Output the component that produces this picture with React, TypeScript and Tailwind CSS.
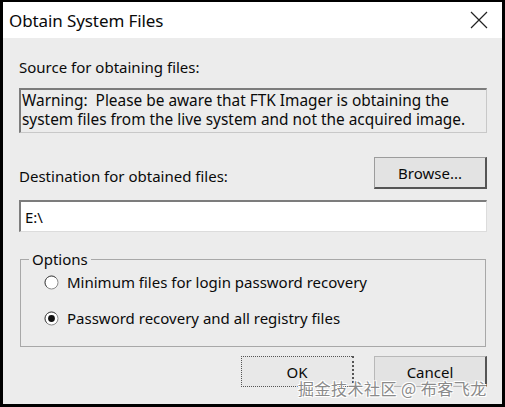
import React from "react";

const font = { fontFamily: '"Noto Sans", "Open Sans", sans-serif' };

function Radio({ checked }: { checked?: boolean }) {
  return (
    <svg width="15" height="15" viewBox="0 0 15 15" className="shrink-0">
      <circle cx="7.5" cy="7.5" r="6.5" fill="#ffffff" stroke="#8a8a8a" strokeWidth="1" />
      <path d="M2.9 12.1 A6.5 6.5 0 0 1 12.1 2.9" fill="none" stroke="#5a5a5a" strokeWidth="1" />
      {checked && <circle cx="7.5" cy="7.5" r="3.4" fill="#111111" />}
    </svg>
  );
}

export default function App() {
  return (
    <div
      className="w-[505px] h-[407px] bg-black pt-[2px] pl-[3px] pr-[3px] pb-[3px] text-[#0a0a0a] relative overflow-hidden"
      style={font}
    >
      <div className="w-full h-full bg-[#ececec] flex flex-col">
        {/* Title bar */}
        <div className="h-[36px] bg-white flex items-center justify-between pl-[6px] pr-[14px] shrink-0">
          <span className="text-[17px] leading-none tracking-[-0.1px]">Obtain System Files</span>
          <svg width="18" height="18" viewBox="0 0 18 18">
            <path d="M1 1 L17 17 M17 1 L1 17" stroke="#222" strokeWidth="1.2" />
          </svg>
        </div>

        <div className="flex flex-col pl-[16px] pr-[15px] text-[15px] leading-[20px]">
          <div className="mt-[19px] h-[20px]">Source for obtaining files:</div>
          <div className="mt-[11px] h-[45px] border-t-2 border-l-2 border-t-[#7c7c7c] border-l-[#7c7c7c] border-b border-r border-b-[#c8c8c8] border-r-[#c8c8c8] pl-[1px] pt-[1px] leading-[19px] text-[15.4px]">
            <div>Warning:&nbsp; Please be aware that FTK Imager is obtaining the</div>
            <div>system files from the live system and not the acquired image.</div>
          </div>

          <div className="mt-[24px] flex items-end justify-between">
            <div className="mb-[3px]">Destination for obtained files:</div>
            <button className="w-[113px] h-[32px] bg-[#e3e3e3] border border-[#9c9c9c] border-r-2 border-b-2 border-r-[#555] border-b-[#555] flex items-center justify-center">
              Browse...
            </button>
          </div>

          <div className="mt-[11px] h-[32px] bg-white border-t-2 border-l-2 border-t-[#7c7c7c] border-l-[#7c7c7c] border-b border-r border-b-[#dcdcdc] border-r-[#dcdcdc] pl-[4px] flex items-center">
            E:\
          </div>

          {/* Options group */}
          <div className="mt-[27px] mx-[1px] h-[88px] border border-[#a8a8a8] relative flex flex-col pl-[23px]">
            <div className="absolute -top-[11px] left-[8px] bg-[#ececec] px-[3px] leading-[20px]">Options</div>
            <div className="mt-[12px] flex items-center gap-[8px]">
              <Radio />
              <span>Minimum files for login password recovery</span>
            </div>
            <div className="mt-[16px] flex items-center gap-[8px]">
              <Radio checked />
              <span>Password recovery and all registry files</span>
            </div>
          </div>

          <div className="mt-[9px] flex justify-end gap-[20px]">
            <button className="w-[113px] h-[31px] bg-[#e8e8e8] border border-dotted border-[#555] border-r-2 border-r-[#555] flex items-center justify-center">
              OK
            </button>
            <button className="w-[113px] h-[31px] bg-[#e3e3e3] border border-[#b8b8b8] border-r-2 border-r-[#555] flex items-center justify-center">
              Cancel
            </button>
          </div>
        </div>
      </div>

      {/* Watermark */}
      <div
        className="absolute left-[298px] top-[380px] text-[16px] leading-none text-[#8a8a8a] tracking-[0.5px]"
        style={{
          fontFamily: '"Noto Sans CJK SC", "Noto Sans", sans-serif',
          textShadow: "1px 1px 0 #fff, -1px -1px 0 #fff, 1px -1px 0 #fff, -1px 1px 0 #fff",
        }}
      >
        掘金技术社区 @ 布客飞龙
      </div>
    </div>
  );
}
